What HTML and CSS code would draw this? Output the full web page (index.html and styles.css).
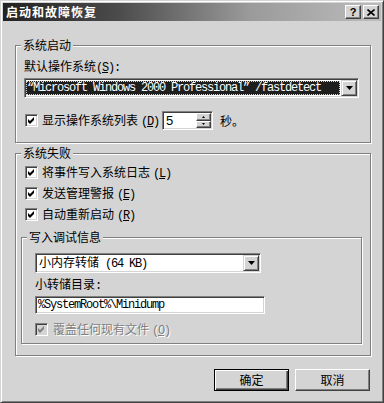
FILE: index.html
```html
<!DOCTYPE html>
<html lang="zh-CN">
<head>
<meta charset="utf-8">
<title>启动和故障恢复</title>
<link rel="stylesheet" href="styles.css">
</head>
<body>
<div class="window">
  <div class="titlebar">
    <span class="title">启动和故障恢复</span>
    <div class="tb-buttons">
      <span class="tb-btn help">?</span>
      <span class="tb-btn close"><svg width="8" height="7" viewBox="0 0 8 7"><path d="M0.5 0.5 L7.5 6.5 M7.5 0.5 L0.5 6.5" stroke="#000" stroke-width="1.6" fill="none"/></svg></span>
    </div>
  </div>
  <div class="content">
    <div class="group g1">
      <span class="legend">系统启动</span>
      <div class="label">默认操作系统<span class="hw">(<u>S</u>):</span></div>
      <div class="combo wide">
        <div class="combo-text selected"><span class="mono">“Microsoft Windows 2000 Professional” /fastdetect</span></div>
        <div class="drop-btn"><svg width="7" height="4" viewBox="0 0 7 4"><path d="M0 0 H7 L3.5 4 Z" fill="#000"/></svg></div>
      </div>
      <div class="row">
        <span class="checkbox"><svg width="7" height="7" viewBox="0 0 7 7"><path d="M0 2 L2 4 L6 0 L6 3 L2 7 L0 5 Z" fill="#000"/></svg></span>
        <span class="cb-label">显示操作系统列表<span class="hw mn">(<u>D</u>)</span></span>
        <div class="spinner">
          <span class="spin-val">5</span>
          <div class="spin-btns">
            <span class="spin-btn"><svg width="3" height="2" viewBox="0 0 3 2"><path d="M1.5 0 L3 2 H0 Z" fill="#000"/></svg></span>
            <span class="spin-btn"><svg width="3" height="2" viewBox="0 0 3 2"><path d="M0 0 H3 L1.5 2 Z" fill="#000"/></svg></span>
          </div>
        </div>
        <span class="sec">秒。</span>
      </div>
    </div>

    <div class="group g2">
      <span class="legend">系统失败</span>
      <div class="cbrow">
        <span class="checkbox"><svg width="7" height="7" viewBox="0 0 7 7"><path d="M0 2 L2 4 L6 0 L6 3 L2 7 L0 5 Z" fill="#000"/></svg></span>
        <span>将事件写入系统日志<span class="hw mn">(<u>L</u>)</span></span>
      </div>
      <div class="cbrow">
        <span class="checkbox"><svg width="7" height="7" viewBox="0 0 7 7"><path d="M0 2 L2 4 L6 0 L6 3 L2 7 L0 5 Z" fill="#000"/></svg></span>
        <span>发送管理警报<span class="hw mn">(<u>E</u>)</span></span>
      </div>
      <div class="cbrow">
        <span class="checkbox"><svg width="7" height="7" viewBox="0 0 7 7"><path d="M0 2 L2 4 L6 0 L6 3 L2 7 L0 5 Z" fill="#000"/></svg></span>
        <span>自动重新启动<span class="hw mn">(<u>R</u>)</span></span>
      </div>

      <div class="group g3">
        <span class="legend">写入调试信息</span>
        <div class="combo narrow">
          <div class="combo-text"><span>小内存转储<span class="hw"> (64 KB)</span></span></div>
          <div class="drop-btn"><svg width="7" height="4" viewBox="0 0 7 4"><path d="M0 0 H7 L3.5 4 Z" fill="#000"/></svg></div>
        </div>
        <div class="label label2">小转储目录<span class="hw">:</span></div>
        <div class="field"><span class="mono">%SystemRoot%\Minidump</span></div>
        <div class="cbrow disabled">
          <span class="checkbox"><svg width="7" height="7" viewBox="0 0 7 7"><path d="M0 2 L2 4 L6 0 L6 3 L2 7 L0 5 Z" fill="#808080"/></svg></span>
          <span class="dis-text">覆盖任何现有文件<span class="hw mn">(<u>O</u>)</span></span>
        </div>
      </div>
    </div>

    <div class="buttons">
      <span class="btn default">确定</span>
      <span class="btn">取消</span>
    </div>
  </div>
</div>
</body>
</html>
```

FILE: styles.css
```css
* { box-sizing: border-box; }
html, body { margin: 0; padding: 0; }
body {
  width: 384px;
  height: 403px;
  background: #d4d4d4;
  font-family: "Noto Sans CJK SC", "Liberation Sans", sans-serif;
  font-size: 12px;
  color: #000;
  overflow: hidden;
}
u { text-decoration: underline; }

.window {
  width: 384px;
  height: 403px;
  border: 1px solid;
  border-color: #d4d4d4 #404040 #404040 #d4d4d4;
  box-shadow: inset 1px 1px #fff, inset -1px -1px #808080;
  padding: 2px;
  background: #d4d4d4;
}

.titlebar {
  height: 18px;
  display: flex;
  align-items: center;
  justify-content: space-between;
  background: linear-gradient(to right, #222 0%, #4a4a4a 30%, #9a9a9a 65%, #bcbcbc 100%);
  padding: 0 2px 0 3px;
}
.title {
  color: #fff;
  font-weight: bold;
  font-size: 12px;
  line-height: 18px;
  letter-spacing: 1px;
}
.tb-buttons { display: flex; gap: 2px; }
.tb-btn {
  width: 16px;
  height: 14px;
  background: #d4d4d4;
  border: 1px solid;
  border-color: #fff #404040 #404040 #fff;
  box-shadow: inset -1px -1px #808080;
  display: flex;
  align-items: center;
  justify-content: center;
}
.help {
  font-family: "Liberation Sans", sans-serif;
  font-weight: bold;
  font-size: 11px;
  line-height: 12px;
}

.content { padding: 24px 10px 0 12px; }

.group {
  position: relative;
  border: 1px solid #808080;
  box-shadow: inset 1px 1px #fff, 1px 1px #fff;
}
.legend {
  position: absolute;
  top: -8px;
  left: 5px;
  padding: 0 2px;
  line-height: 14px;
  background: #d4d4d4;
}

.g1 {
  height: 98px;
  padding: 14px 11px 0 8px;
}
.label { line-height: 12px; height: 12px; }

.mono, .hw {
  font-family: "Liberation Mono", monospace;
  font-size: 12px;
  letter-spacing: -1.2px;
  white-space: pre;
}
.mn { margin-left: 3px; }

.combo {
  display: flex;
  height: 20px;
  margin-top: 6px;
  border: 1px solid;
  border-color: #808080 #fff #fff #808080;
  box-shadow: inset 1px 1px #404040, inset -1px -1px #d4d4d4;
  background: #fff;
  padding: 1px;
}
.combo.wide { width: 335px; }
.combo.narrow { width: 226px; margin-top: 0; }
.combo-text {
  flex: 1;
  display: flex;
  align-items: center;
  padding-left: 2px;
  line-height: 14px;
  white-space: nowrap;
}
.combo-text.selected {
  margin: 1px 1px 1px 0;
  padding-left: 1px;
  background: #1e1e1e;
  color: #fff;
  outline: 1px dotted #d4d4d4;
  outline-offset: -1px;
}
.drop-btn {
  width: 16px;
  height: 16px;
  flex: none;
  background: #d4d4d4;
  border: 1px solid;
  border-color: #d4d4d4 #404040 #404040 #d4d4d4;
  box-shadow: inset 1px 1px #fff, inset -1px -1px #808080;
  display: flex;
  align-items: center;
  justify-content: center;
}

.row {
  display: flex;
  align-items: center;
  height: 19px;
  margin-top: 13px;
}
.checkbox {
  width: 13px;
  height: 13px;
  flex: none;
  border: 1px solid;
  border-color: #808080 #fff #fff #808080;
  box-shadow: inset 1px 1px #404040, inset -1px -1px #d4d4d4;
  background: #fff;
  display: flex;
  align-items: center;
  justify-content: center;
}
.row .checkbox { margin-left: 1px; }
.cb-label { margin-left: 4px; line-height: 13px; }

.spinner {
  display: flex;
  width: 51px;
  height: 19px;
  margin-left: 3px;
  border: 1px solid;
  border-color: #808080 #fff #fff #808080;
  box-shadow: inset 1px 1px #404040, inset -1px -1px #d4d4d4;
  background: #fff;
  padding: 1px;
}
.spin-val {
  flex: 1;
  padding-left: 2px;
  line-height: 15px;
  font-family: "Liberation Sans", sans-serif;
  font-size: 13px;
}
.spin-btns {
  width: 15px;
  display: flex;
  flex-direction: column;
}
.spin-btn {
  flex: 1;
  background: #d4d4d4;
  border: 1px solid;
  border-color: #fff #404040 #404040 #fff;
  box-shadow: inset -1px -1px #808080;
  display: flex;
  align-items: center;
  justify-content: center;
}
.sec { margin-left: 7px; line-height: 13px; }

.g2 {
  height: 203px;
  margin-top: 10px;
  padding: 12px 0 0 5px;
}
.cbrow {
  display: flex;
  align-items: center;
  gap: 4px;
  height: 13px;
  line-height: 13px;
  margin-left: 4px;
}
.cbrow + .cbrow { margin-top: 8px; }

.g3 {
  width: 341px;
  height: 107px;
  margin-top: 16px;
  padding: 15px 0 0 13px;
}
.label2 { margin-top: 5px; }
.field {
  width: 230px;
  height: 18px;
  margin-top: 6px;
  border: 1px solid;
  border-color: #808080 #fff #fff #808080;
  box-shadow: inset 1px 1px #404040, inset -1px -1px #d4d4d4;
  background: #fff;
  padding-left: 2px;
  line-height: 16px;
  display: flex;
  align-items: center;
}
.g3 .cbrow.disabled { margin-top: 9px; margin-left: 0; gap: 5px; }
.disabled .checkbox { background: #d4d4d4; }
.dis-text { color: #808080; text-shadow: 1px 1px #fff; }

.buttons {
  display: flex;
  justify-content: flex-end;
  gap: 6px;
  margin-top: 13px;
  padding-right: 1px;
}
.btn {
  width: 75px;
  height: 22px;
  display: flex;
  align-items: center;
  justify-content: center;
  background: #d4d4d4;
  border: 1px solid;
  border-color: #fff #404040 #404040 #fff;
  box-shadow: inset -1px -1px #808080;
  line-height: 14px;
}
.btn.default {
  border-color: #000;
  box-shadow: inset 1px 1px #fff, inset -1px -1px #404040, inset -2px -2px #808080;
}
```
